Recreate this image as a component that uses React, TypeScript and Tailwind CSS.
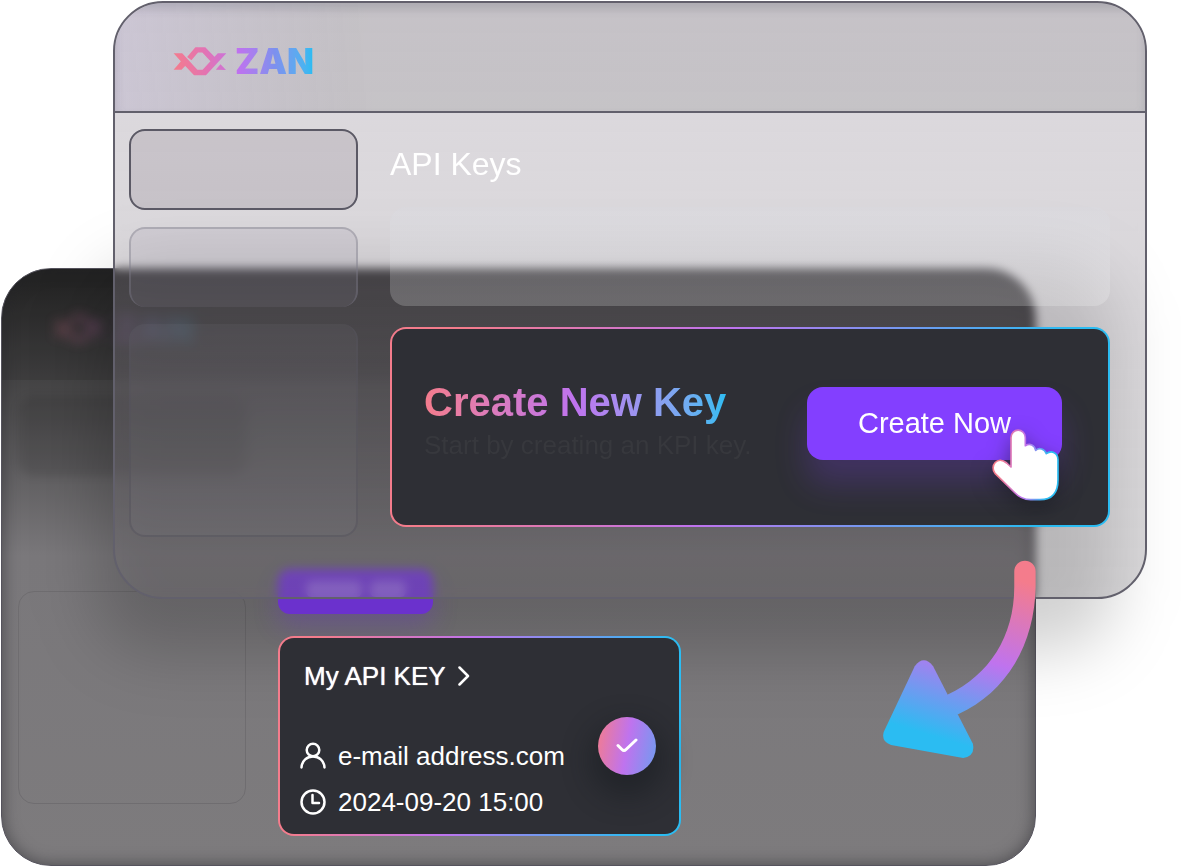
import { ReactNode, useId } from "react";
import clsx from "clsx";

const gradientBorder =
  "rounded-2xl border-2 border-transparent [background:linear-gradient(#2e2f35,#2e2f35)_padding-box,linear-gradient(100deg,#f47c8c_10%,#bf73ee_45%,#2bbcf2_90%)_border-box]";

export default function App() {
  return (
    <main className="isolate grid overflow-hidden bg-white font-['Liberation_Sans',Arial,sans-serif] text-white">
      <KeyWindow />
      <div className="[grid-area:1/1] mt-[265px] mb-[215px] ml-[95px] mr-[85px] rounded-[60px] bg-black/18 blur-[32px]" />
      <CreateWindow />
      <CurvedArrow />
    </main>
  );
}

function CreateWindow() {
  return (
    <section className="[grid-area:1/1] z-20 self-start mt-px ml-[113px] mr-[53px] overflow-hidden rounded-[50px] border-2 border-[#62606c] bg-linear-to-b from-[rgba(164,155,168,0.39)] to-[rgba(118,114,120,0.27)] backdrop-blur-[5px]">
      <header className="flex h-[110px] items-center border-b-2 border-[#62606c] bg-linear-to-r from-[#8c7db0]/20 via-black/10 via-25% to-black/10 pt-2 pl-[58px] shadow-[inset_0_6px_10px_rgba(70,75,90,0.2)]">
        <Logo />
      </header>
      <div className="flex gap-8 pt-4 pr-[35px] pb-[60px] pl-[14px]">
        <Sidebar />
        <div className="min-w-0 flex-1">
          <h1 className="mb-[8px] text-[32px] leading-[70px]">API Keys</h1>
          <div className="mb-[21px] h-[99px] rounded-2xl bg-linear-to-b from-[#d8dce4]/20 to-white/20" />
          <div
            className={clsx(
              gradientBorder,
              "flex h-[200px] items-start justify-between pt-12 pr-[46px] pl-8"
            )}
          >
            <div>
              <h2 className="w-fit bg-linear-to-r from-[#f47c8c] via-[#bf73ee] to-[#2bbcf2] bg-clip-text text-[40px] leading-[50px] font-bold text-transparent">
                Create New Key
              </h2>
              <p className="text-[26px] leading-9 text-[#37383d]">
                Start by creating an KPI key.
              </p>
            </div>
            <div className="relative mt-[10px]">
              <button className="h-[73px] w-[255px] rounded-2xl bg-[#833fff] text-[29px] shadow-[0_24px_32px_rgba(131,63,255,0.22)]">
                Create Now
              </button>
              <HandCursor />
            </div>
          </div>
        </div>
      </div>
    </section>
  );
}

function KeyWindow() {
  return (
    <section className="[grid-area:1/1] self-start mt-[268px] mb-px ml-px mr-[164px] overflow-hidden rounded-[50px] border border-[#55535d] bg-linear-to-b from-[#262626] via-[#7a787b] via-48% to-[#7d7b7d] shadow-[inset_0_0_16px_rgba(40,40,45,0.6)]">
      <header className="flex h-[111px] items-center bg-black/10 pt-2 pl-[50px]">
        <div className="opacity-25 blur-[6px]">
          <Logo />
        </div>
      </header>
      <div className="flex gap-8 pt-4 pr-[35px] pb-[29px] pl-4">
        <Sidebar faded />
        <div className="min-w-0 flex-1">
          <div className="relative z-10 mt-[173px] mb-[22px] flex h-[45px] w-[155px] items-start justify-center gap-2 rounded-xl bg-[#6b31cd] pt-3 shadow-[0_12px_24px_rgba(107,49,205,0.3)]">
            <span className="h-4 w-14 rounded-md bg-white/20" />
            <span className="h-4 w-9 rounded-md bg-white/20" />
          </div>
          <div
            className={clsx(
              gradientBorder,
              "relative z-10 flex h-[200px] w-[403px] items-end justify-between pr-[23px] pb-4 pl-5"
            )}
          >
            <div>
              <a
                href="#key"
                className="mb-12 flex items-center gap-3 pl-1 text-[26px] leading-8 [text-shadow:0_0_1px_#fff]"
              >
                My API KEY
                <svg width="12" height="20" viewBox="0 0 12 20" fill="none">
                  <path
                    d="M1.5 1.5 10 10l-8.500 8.500"
                    stroke="#fff"
                    strokeWidth="2.500"
                    strokeLinecap="round"
                    strokeLinejoin="round"
                  />
                </svg>
              </a>
              <p className="mb-[14px] flex items-center gap-3 text-[26px] leading-8">
                <UserIcon />
                e-mail address.com
              </p>
              <p className="flex items-center gap-3 text-[26px] leading-8">
                <ClockIcon />
                2024-09-20 15:00
              </p>
            </div>
            <div className="mb-[43px] flex size-[58px] items-center justify-center rounded-full bg-linear-[100deg,#f47c8c,#bf73ee_50%,#6f9cf0] shadow-[0_14px_28px_8px_rgba(20,24,28,0.45)]">
              <svg width="22" height="16" viewBox="0 0 22 16" fill="none">
                <path
                  d="M2 7.500 6 11.500Q8 13.500 10 11.500L20 2"
                  stroke="#fff"
                  strokeWidth="3"
                  strokeLinecap="round"
                />
              </svg>
            </div>
          </div>
        </div>
      </div>
    </section>
  );
}

function Sidebar({ faded = false }: { faded?: boolean }) {
  if (faded) {
    return (
      <div className="flex w-[228px] shrink-0 flex-col gap-[18px]">
        <div className="h-[80px] rounded-2xl bg-black/10 blur-[4px]" />
        <div className="h-[79px] rounded-2xl" />
        <div className="h-[213px] rounded-2xl border border-[#6f6d70]" />
      </div>
    );
  }
  return (
    <div className="flex w-[229px] shrink-0 flex-col gap-[17px]">
      <div className="h-[81px] rounded-2xl border-2 border-[#5b5965] bg-[#3c2c38]/12" />
      <div className="h-[80px] rounded-2xl border-2 border-b-0 border-[#7b7987]/40 bg-[#8c8898]/15" />
      <div className="h-[213px] rounded-2xl border-2 border-t-0 border-[#55535c]/50 bg-[#8c8898]/10" />
    </div>
  );
}

function Logo() {
  return (
    <div className="flex items-center gap-2">
      <svg width="54" height="29" viewBox="218 142 162 88">
        <Gradient x1={218} y1={200} x2={420} y2={170}>
          {(id) => (
            <g fill={`url(#${id})`}>
              <path d="M219 161H245L291 211H307L353 161H379L317 228H281L242 187Z" />
              <path d="M219 211 243 183 256 197 243 211Z" />
              <path d="M260 172 285 143H315L348 177 335 190 306 159H293L273 182Z" />
              <path d="M347 211 361 194 378 212Z" />
            </g>
          )}
        </Gradient>
      </svg>
      <span className="bg-linear-to-r from-[#c36eef] via-[#7d90ee] to-[#22bdf2] bg-clip-text font-[Inter,sans-serif] text-[35px] leading-[34px] font-black text-transparent">
        ZAN
      </span>
    </div>
  );
}

function Gradient({
  children,
  ...line
}: {
  x1: number;
  y1: number;
  x2: number;
  y2: number;
  children: (id: string) => ReactNode;
}) {
  const id = useId();
  return (
    <>
      <defs>
        <linearGradient id={id} gradientUnits="userSpaceOnUse" {...line}>
          <stop offset="0" stopColor="#f47c8c" />
          <stop offset="0.5" stopColor="#e273b4" />
          <stop offset="1" stopColor="#bf73ee" />
        </linearGradient>
      </defs>
      {children(id)}
    </>
  );
}

function HandCursor() {
  return (
    <svg
      className="absolute top-10 -right-4 drop-shadow-[0_8px_10px_rgba(20,24,28,0.5)]"
      width="88"
      height="76"
      viewBox="630 172 264 228"
    >
      <defs>
        <linearGradient id="hand" x1="0" y1="0.4" x2="1" y2="0.5">
          <stop offset="0.1" stopColor="#f47c8c" />
          <stop offset="0.5" stopColor="#bf73ee" />
          <stop offset="0.85" stopColor="#2bbcf2" />
        </linearGradient>
      </defs>
      <path
        d="M693 292V204C693 174 736 174 736 204V228C750 220 764 226 767 242C778 232 794 238 799 252C815 240 834 250 834 270V330C834 370 815 390 780 390H752C732 390 716 382 702 367L645 311C628 290 652 256 680 280Z"
        fill="#fff"
        stroke="url(#hand)"
        strokeWidth="5"
        strokeLinejoin="round"
      />
    </svg>
  );
}

function CurvedArrow() {
  return (
    <svg
      className="[grid-area:1/1] relative z-30 mt-[560px] mr-[164px] justify-self-end"
      width="153"
      height="199"
      viewBox="68 30 458 596"
    >
      <defs>
        <linearGradient
          id="arrow"
          gradientUnits="userSpaceOnUse"
          x1="510"
          y1="100"
          x2="360"
          y2="600"
        >
          <stop offset="0" stopColor="#f47c8c" />
          <stop offset="0.5" stopColor="#bf73ee" />
          <stop offset="1" stopColor="#2bbcf2" />
        </linearGradient>
      </defs>
      <path
        d="M461 64A32 32 0 0 1 525 64V110C522 280 440 425 293 492L250 480 262 433C385 375 461 260 461 110Z"
        fill="url(#arrow)"
      />
      <path
        d="M163 348Q190 313 218 348L337 580Q345 618 308 623L92 584Q62 574 70 545Z"
        fill="url(#arrow)"
      />
    </svg>
  );
}

function UserIcon() {
  return (
    <svg width="26" height="28" viewBox="0 0 26 28" fill="none">
      <g stroke="#fff" strokeWidth="2.500" strokeLinecap="round">
        <circle cx="13" cy="8" r="6.300" />
        <path d="M1.500 25.500C2 18.500 7 14.500 13 14.500S24 18.500 24.500 25.500" />
      </g>
    </svg>
  );
}

function ClockIcon() {
  return (
    <svg width="26" height="26" viewBox="0 0 26 26" fill="none">
      <g stroke="#fff" strokeWidth="2.500" strokeLinecap="round">
        <circle cx="13" cy="13" r="11.500" />
        <path d="M12.500 6V14H19" strokeLinejoin="round" />
      </g>
    </svg>
  );
}
